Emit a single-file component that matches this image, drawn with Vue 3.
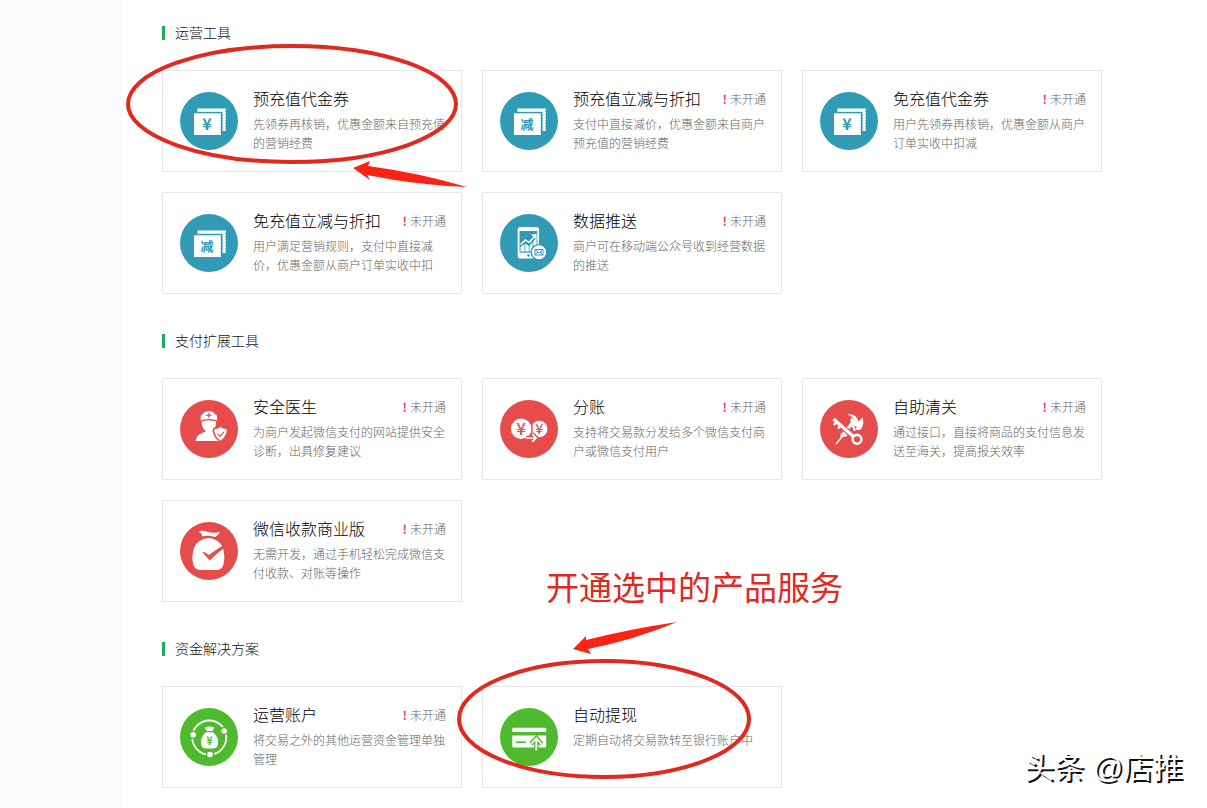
<script setup>
const sections = [
  {
    title: '运营工具',
    tone: 'blue',
    cards: [
      { icon: 'yuan', title: '预充值代金券', text: '先领券再核销，优惠金额来自预充值的营销经费', off: false },
      { icon: 'minus', title: '预充值立减与折扣', text: '支付中直接减价，优惠金额来自商户预充值的营销经费', off: true },
      { icon: 'yuan', title: '免充值代金券', text: '用户先领券再核销，优惠金额从商户订单实收中扣减', off: true },
      { icon: 'minus', title: '免充值立减与折扣', text: '用户满足营销规则，支付中直接减价，优惠金额从商户订单实收中扣', off: true },
      { icon: 'phone', title: '数据推送', text: '商户可在移动端公众号收到经营数据的推送', off: true }
    ]
  },
  {
    title: '支付扩展工具',
    tone: 'red',
    cards: [
      { icon: 'doctor', title: '安全医生', text: '为商户发起微信支付的网站提供安全诊断，出具修复建议', off: true },
      { icon: 'split', title: '分账', text: '支持将交易款分发给多个微信支付商户或微信支付用户', off: true },
      { icon: 'customs', title: '自助清关', text: '通过接口，直接将商品的支付信息发送至海关，提高报关效率', off: true },
      { icon: 'bag', title: '微信收款商业版', text: '无需开发，通过手机轻松完成微信支付收款、对账等操作', off: true }
    ]
  },
  {
    title: '资金解决方案',
    tone: 'green',
    cards: [
      { icon: 'account', title: '运营账户', text: '将交易之外的其他运营资金管理单独管理', off: true },
      { icon: 'card', title: '自动提现', text: '定期自动将交易款转至银行账户中', off: false }
    ]
  }
]
</script>

<template>
  <div class="page">
    <aside class="side"></aside>
    <main class="main">
      <section v-for="s in sections" :key="s.title" class="section" :class="s.tone">
        <h2 class="heading">{{ s.title }}</h2>
        <div class="grid">
          <a v-for="c in s.cards" :key="c.title" class="card" href="#">
            <svg class="icon" viewBox="0 0 58 58" aria-hidden="true">
              <circle class="tone" cx="29" cy="29" r="29" />

              <g v-if="c.icon === 'yuan' || c.icon === 'minus'">
                <path class="w" d="M17.5 16.5H46V39H42V22H17.5Z" />
                <path class="tone" d="M17 19.8H42.5V41H17Z" />
                <path class="w" d="M14 21.3H41V43H14Z" />
                <path class="dots" d="M41.5 23V42M46.2 19.5V39" />
                <text v-if="c.icon === 'yuan'" class="glyph" x="27" y="38" font-size="16">¥</text>
                <text v-else class="glyph" x="27" y="37" font-size="13">减</text>
              </g>

              <g v-else-if="c.icon === 'phone'">
                <rect class="w" x="17.7" y="13" width="21.3" height="31.5" rx="2.5" />
                <path class="tone" d="M19.5 17H37.3V38.7H19.5Z" />
                <circle class="tone" cx="28.5" cy="41.5" r="1.3" />
                <path class="w" d="M20.5 33L24.5 30V37.5H20.5ZM25.3 29.5L28.7 32V37.5H25.3ZM29.5 32L32.7 28V37.5H29.5ZM33.5 27L36.5 24V37.5H33.5Z" />
                <path class="wl" d="M20.5 30.5L25.5 26L29 28.5L35 22" stroke-width="1.5" />
                <path class="w" d="M36.5 20V25.5L31 20.5Z" />
                <circle class="w ring" cx="39" cy="38.3" r="7.7" />
                <path class="tl" d="M35 35.5H43V41H35ZM35 35.5L39 39L43 35.5M35 41L37.8 38M43 41L40.2 38" stroke-width="1" />
              </g>

              <g v-else-if="c.icon === 'doctor'">
                <path class="w" d="M21.5 21Q29 19 36.3 21L35.5 26.5Q34 30 32 31Q33 32.5 37 33.2Q41 34.5 42 41H15.5Q17 34 22 33Q25 32.2 25.8 31Q23.5 29.5 22.3 26.5Z" />
                <path class="w ring" d="M20 21.4V15.5Q22 14 24 11.6Q29 9.6 33.8 11.6Q35.5 14.3 37.8 15.5V21.4Q29 17.8 20 21.4Z" stroke-width="1" />
                <path class="tl" d="M28.8 12.8V17.8M26.2 15.3H31.4" stroke-width="1.2" />
                <path class="w ring" d="M40.5 26.2Q43.5 28.7 47.3 28.5Q48.2 36.5 40.5 41.7Q32.8 36.5 33.7 28.5Q37.5 28.7 40.5 26.2Z" stroke-width="1.5" />
                <path class="tl" d="M37.5 33.8L40 36.3L44 31.8" stroke-width="1.2" />
              </g>

              <g v-else-if="c.icon === 'split'">
                <circle class="w" cx="39.3" cy="29" r="8.2" />
                <circle class="w ring" cx="21.2" cy="28.8" r="11" stroke-width="1.4" />
                <text class="glyph light" x="21.2" y="35" font-size="17">¥</text>
                <text class="glyph light" x="39.3" y="34" font-size="14">¥</text>
                <path class="tl" d="M26 38H36M32 33.7L36.5 38L32 42.3" stroke-width="4" />
                <path class="wl" d="M26 38H36M32.2 34.2L36 38L32.2 41.8" stroke-width="1.7" />
              </g>

              <g v-else-if="c.icon === 'customs'">
                <path class="wl" d="M16 44L23 35.5" stroke-width="1.3" />
                <path class="wl" d="M21 37L33 22" stroke-width="3" />
                <path class="wl" d="M21.5 33Q23 38 27 34.5M24 30Q28 31 29 35M29 25Q35 26 34.5 31" stroke-width="2" />
                <path class="w" d="M27 14.5Q36 13 38.5 21.5L42.5 17.5Q44.5 23.5 41.5 28.5Q39 31.5 35 29L37 27L33 25.5L31.5 21.5L34.5 21Q34.5 17 27 14.5Z" />
                <circle class="w" cx="32.3" cy="20.3" r="2" />
                <path class="tl" d="M14.5 20L34 37" stroke-width="5.5" />
                <path class="wl" d="M13.5 19L34 37" stroke-width="3.4" />
                <path class="wl" d="M16.5 22L14 25M20.5 25.5L18 28.5" stroke-width="2.5" />
                <circle class="wl" cx="37" cy="39.3" r="4.4" stroke-width="2.6" />
              </g>

              <g v-else-if="c.icon === 'bag'">
                <path class="w" d="M18.7 9.5Q23 8 28 9.9Q33 11.5 39.8 10Q38.5 13.5 35 15Q28 12.8 22 14.3Q22.5 11.8 18.7 9.5Z" />
                <path class="w" d="M21.5 18Q28.5 14 35.5 18Q40.5 20 43 26Q45.5 35 43.3 43Q42 48 36 48H21Q15 48 13.5 43Q11 35 14 26Q16.5 20 21.5 18Z" />
                <path class="tone" d="M22 29.8Q26 30 29 33Q35 28.5 42 24L44 26Q36 32 29.8 38.5Z" />
              </g>

              <g v-else-if="c.icon === 'account'">
                <circle class="wl" cx="29.3" cy="29.5" r="17" stroke-width="1.8" />
                <circle class="w ring" cx="13.2" cy="26.7" r="3.5" />
                <circle class="w ring" cx="44.2" cy="23" r="3.5" />
                <circle class="w ring" cx="30" cy="46.5" r="3.5" />
                <path class="w" d="M24.7 19.5Q29.5 17.5 34.3 19.5L32.5 23H26.5Z" />
                <path class="w" d="M26 24.3H33Q37.5 28 38.2 33Q38.5 40.5 33 40.5H26Q20.5 40.5 21 33Q21.5 28 26 24.3Z" />
                <text class="glyph" x="29.6" y="36.8" font-size="11">¥</text>
              </g>

              <g v-else>
                <path class="w" d="M13.5 19.7H45Q46.2 19.7 46.2 21V24H12.3V21Q12.3 19.7 13.5 19.7Z" />
                <path class="w" d="M12.3 27.5H46.2V38Q46.2 39.5 45 39.5H13.5Q12.3 39.5 12.3 38Z" />
                <path class="tl" d="M16 34.2H25.8" stroke-width="1.6" />
                <path class="tl" d="M36.3 42.5V30M31 36L36.3 30L41.6 36" stroke-width="4.4" />
                <path class="wl" d="M36.3 42.5V30M31.3 35.8L36.3 30.2L41.3 35.8" stroke-width="1.8" />
              </g>
            </svg>
            <div class="body">
              <div class="top">
                <h3 class="name">{{ c.title }}</h3>
                <span v-if="c.off" class="status"><b class="mark">!</b>未开通</span>
              </div>
              <p class="text">{{ c.text }}</p>
            </div>
          </a>
        </div>
      </section>
    </main>

    <svg class="notes" width="1207" height="808" viewBox="0 0 1207 808">
      <ellipse cx="292" cy="104" rx="164" ry="58" />
      <ellipse cx="604" cy="719" rx="145" ry="58" />
      <path d="M353 168L370 161L368 166Q420 173 467 187Q416 185 367 175L370 180Z" />
      <path d="M573 649L586 636L586 640Q630 629 677 622Q634 640 588 649L591 654Z" />
      <text x="546" y="600">开通选中的产品服务</text>
    </svg>
    <div class="watermark">头条 @店推</div>
  </div>
</template>

<style>
body {
  margin: 0;
  background: #fff;
}
</style>

<style scoped>
.page {
  position: relative;
  display: flex;
  min-height: 100vh;
  overflow: hidden;
  font-family: "Noto Sans CJK SC", sans-serif;
  font-weight: 300;
}
.side {
  flex: 0 0 122px;
  background: #fafbfd;
}
.main {
  flex: 1;
  padding: 22px 40px 20px;
}
.section + .section {
  margin-top: 37px;
}
.blue { --tone: #319ab4; }
.red { --tone: #e64c4b; }
.green { --tone: #4fba2e; }
.heading {
  display: flex;
  align-items: center;
  margin: 0 0 27px;
  font-size: 14px;
  font-weight: 300;
  line-height: 20px;
  color: #111;
}
.heading::before {
  content: "";
  width: 3px;
  height: 14px;
  margin: 2px 10px 0 0;
  background: #1aad5b;
}
.section {
  padding-bottom: 0;
}
.grid {
  display: grid;
  grid-template-columns: repeat(auto-fill, 300px);
  gap: 20px;
  margin-top: 28px;
}
.card {
  display: flex;
  gap: 15px;
  padding: 16px 15px 19px 17px;
  border: 1px solid #e7e7eb;
  background: #fff;
  color: #000;
  text-decoration: none;
}
.section + .section {
  margin-top: 36px;
}
.icon {
  flex: none;
  width: 58px;
  height: 58px;
  margin-top: 5px;
}
.tone { fill: var(--tone); }
.w { fill: #fff; }
.wl { fill: none; stroke: #fff; }
.tl { fill: none; stroke: var(--tone); }
.ring { stroke: var(--tone); stroke-width: 1.4; }
.dots {
  fill: none;
  stroke: var(--tone);
  stroke-width: 2;
  stroke-linecap: round;
  stroke-dasharray: 0 3;
}
.glyph {
  fill: var(--tone);
  font-family: "Noto Sans CJK SC", sans-serif;
  font-weight: 700;
  text-anchor: middle;
}
.light {
  font-weight: 500;
}
.body {
  flex: 1;
  min-width: 0;
}
.top {
  display: flex;
  justify-content: space-between;
  align-items: flex-start;
  height: 24px;
}
.name {
  margin: 0;
  font-size: 16px;
  font-weight: 300;
  line-height: 22px;
  white-space: nowrap;
}
.status {
  display: flex;
  gap: 3px;
  font-size: 12px;
  line-height: 24px;
  color: #666;
  white-space: nowrap;
}
.mark {
  color: #e0484d;
  font-weight: 700;
}
.text {
  margin: 3px 0 0;
  font-size: 12px;
  line-height: 19px;
  color: #666;
}
.notes {
  position: absolute;
  left: 0;
  top: 0;
  pointer-events: none;
}
.notes ellipse {
  fill: none;
  stroke: #e1291f;
  stroke-width: 4;
}
.notes path {
  fill: #fb2316;
}
.notes text {
  fill: #e1291f;
  font-size: 33px;
  font-weight: 400;
}
.watermark {
  position: absolute;
  right: 24px;
  bottom: 18px;
  font-family: "Liberation Sans", "Noto Sans CJK SC", sans-serif;
  font-size: 30px;
  font-weight: 400;
  line-height: 44px;
  color: #fff;
  text-shadow: 2px 2px 0 #111;
}
</style>
